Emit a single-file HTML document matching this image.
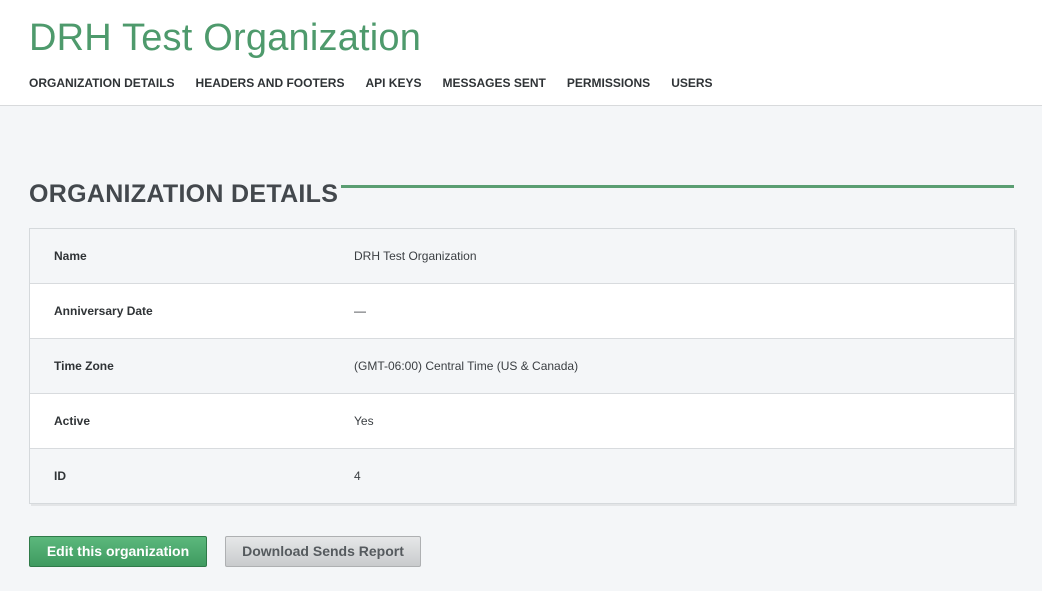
<!DOCTYPE html>
<html><head><style>
body{margin:0;width:1042px;height:591px;overflow:hidden;background:#f4f6f8;font-family:"Liberation Sans",sans-serif;}
.hdr{background:#fff;height:105px;border-bottom:1px solid #d8dadc;position:relative}
.title{position:absolute;left:29px;top:17px;font-size:38px;color:#4e9a6c;letter-spacing:0.2px}
.nav{position:absolute;left:29px;top:76px;font-size:12px;font-weight:bold;color:#2f3336;white-space:nowrap}
.nav span{margin-right:21px}
h2{position:absolute;left:29px;top:180px;margin:0;font-size:25px;color:#43484d;letter-spacing:0.3px}
.line{position:absolute;left:341px;top:185px;width:673px;height:3px;background:#5a9e72}
.tbl{position:absolute;left:29px;top:228px;width:984px;border:1px solid #d5d9dc;box-shadow:2px 2px 0 #e3e5e7}
.row{height:54px;border-top:1px solid #d8dbde;position:relative;font-size:12px;color:#2f3336}
.row:first-child{border-top:none}
.row:nth-child(odd){background:#f4f6f8}.row:nth-child(even){background:#fff}
.row b{position:absolute;left:24px;top:20px}
.row i{font-style:normal;position:absolute;left:324px;top:20px;color:#3a3e42}
.btn{position:absolute;top:536px;height:29px;line-height:29px;border-radius:2px;font-size:14px;font-weight:bold;text-align:center}
.g{left:29px;width:176px;background:linear-gradient(#5cb87c,#3f9a60);border:1px solid #2f7a49;color:#fff}
.s{left:225px;width:194px;background:linear-gradient(#e6e7e8,#c9cbcd);border:1px solid #aeb0b2;color:#555a5e}
</style></head><body>
<div class="hdr"><div class="title">DRH Test Organization</div>
<div class="nav"><span>ORGANIZATION DETAILS</span><span>HEADERS AND FOOTERS</span><span>API KEYS</span><span>MESSAGES SENT</span><span>PERMISSIONS</span><span>USERS</span></div></div>
<h2>ORGANIZATION DETAILS</h2><div class="line"></div>
<div class="tbl">
<div class="row"><b>Name</b><i>DRH Test Organization</i></div>
<div class="row"><b>Anniversary Date</b><i>—</i></div>
<div class="row"><b>Time Zone</b><i>(GMT-06:00) Central Time (US &amp; Canada)</i></div>
<div class="row"><b>Active</b><i>Yes</i></div>
<div class="row"><b>ID</b><i>4</i></div>
</div>
<div class="btn g">Edit this organization</div>
<div class="btn s">Download Sends Report</div>
</body></html>
